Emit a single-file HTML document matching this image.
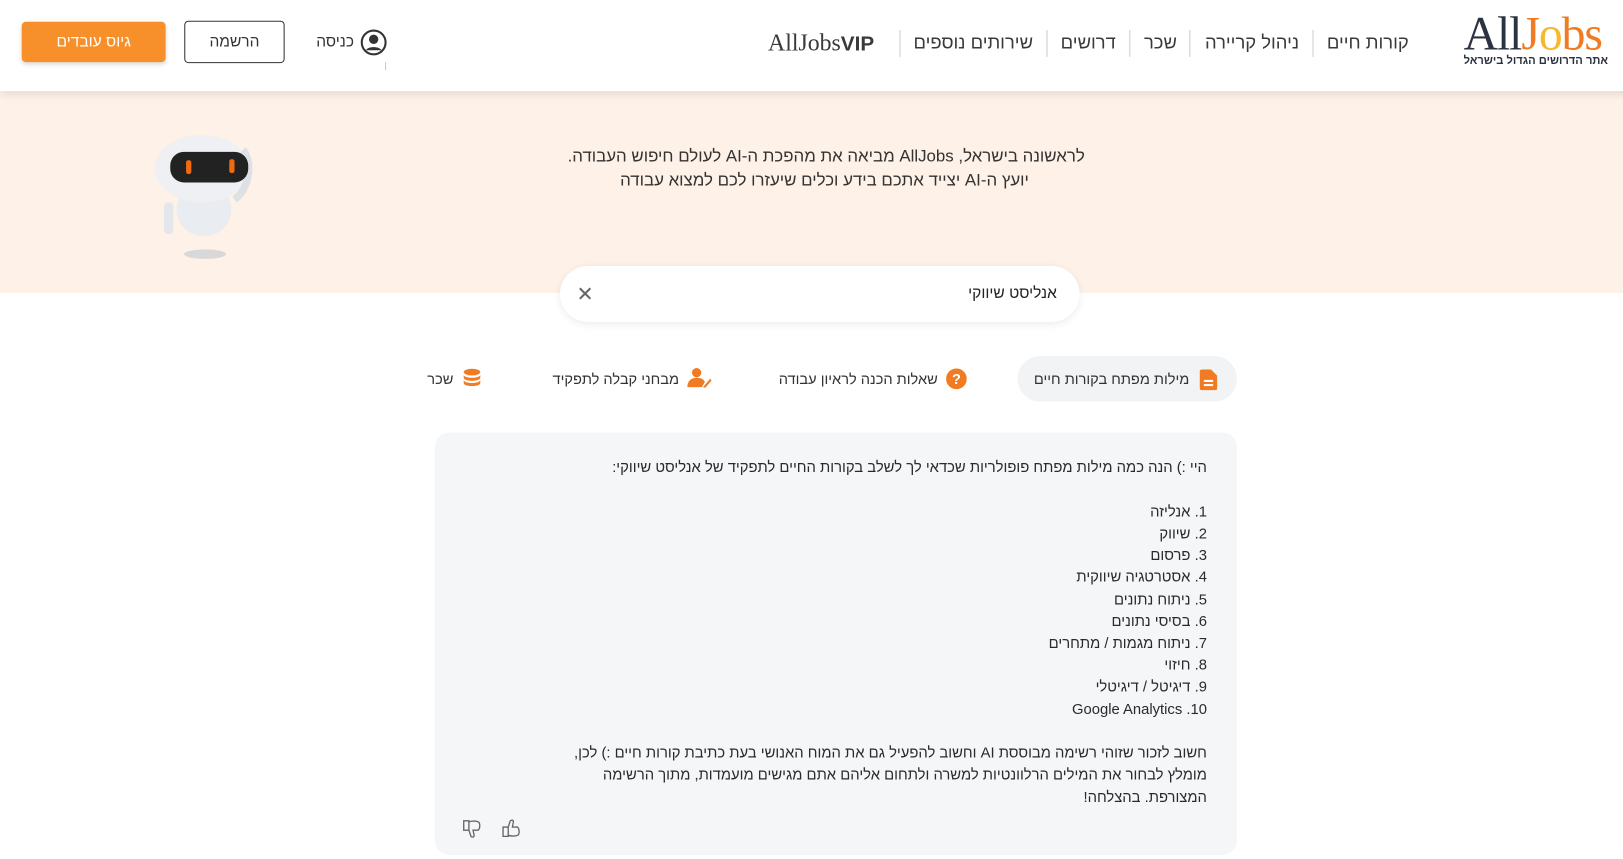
<!DOCTYPE html>
<html lang="he" dir="rtl"><head><meta charset="utf-8"><style>
*{box-sizing:border-box;margin:0;padding:0}
body{width:1623px;height:854px;overflow:hidden;background:#fff;font-family:"Liberation Sans","Noto Sans CJK SC",sans-serif;color:#333;position:relative}
#w{position:absolute;left:0;top:0;width:1623px;height:830px;transform:scale(1.0351);transform-origin:0 0}
.hdr{position:absolute;left:0;top:0;width:1623px;height:88px;background:#fff;box-shadow:0 3px 8px rgba(0,0,0,.1);z-index:2}
.a{position:absolute;white-space:nowrap}
.nav{font-size:17.8px;color:#3a3a3a;top:31px}
.sep{position:absolute;top:29px;width:1px;height:26px;background:#ccc}
.banner{position:absolute;left:0;top:88px;width:1623px;height:195px;background:#fef1e7}
.box{position:absolute;left:420px;top:418px;width:775px;height:408px;background:#f5f6f7;border-radius:14px}
.ln{position:absolute;right:457px;font-size:14.3px;color:#2a2a2a;white-space:nowrap}
</style></head><body><div id="w">
<div class="hdr">
 <div class="a" style="left:1414px;top:6px;font-family:'Liberation Serif',serif;font-size:46px;color:#2c3340;letter-spacing:-1px" dir="ltr">All<span style="color:#f07b22">J<span style="color:#f5b92a">o</span>bs</span></div>
 <div class="a" style="left:1414px;top:53px;font-size:10.8px;font-weight:bold;color:#2c3340">אתר הדרושים הגדול בישראל</div>
 <div class="a nav" style="right:262px">קורות חיים</div>
 <div class="sep" style="left:1268px"></div>
 <div class="a nav" style="right:368px">ניהול קריירה</div>
 <div class="sep" style="left:1149px"></div>
 <div class="a nav" style="right:486px">שכר</div>
 <div class="sep" style="left:1091px"></div>
 <div class="a nav" style="right:545px">דרושים</div>
 <div class="sep" style="left:1011px"></div>
 <div class="a nav" style="right:625px">שירותים נוספים</div>
 <div class="sep" style="left:869px"></div>
 <div class="a" dir="ltr" style="left:742px;top:29px;font-family:'Liberation Serif',serif;font-size:23px;color:#3a3a3a">AllJobs<b style="font-family:'Liberation Sans';font-size:20px;color:#3a3a3a">VIP</b></div>
 <svg class="a" style="left:348px;top:28px" width="26" height="26" viewBox="0 0 26 26"><circle cx="13" cy="13" r="11.5" fill="none" stroke="#333" stroke-width="2"/><circle cx="13" cy="10" r="4.5" fill="#333"/><path d="M5.5 20.5c2-4 13-4 15 0" fill="#333"/></svg>
 <div class="a" style="right:1281px;top:32px;font-size:15px;color:#333">כניסה</div>
 <div class="a" style="left:372px;top:60px;width:1px;height:8px;background:#ccc"></div>
 <div class="a" style="left:178px;top:20px;width:97px;height:41px;border:1px solid #333;border-radius:4px;text-align:center;line-height:39px;font-size:15px;color:#333">הרשמה</div>
 <div class="a" style="left:21px;top:21px;width:139px;height:39px;background:#f7902a;border-radius:4px;text-align:center;line-height:39px;font-size:15px;color:#fff;box-shadow:0 2px 4px rgba(0,0,0,.15)">גיוס עובדים</div>
</div>
<div class="banner"></div>
<svg class="a" style="left:138px;top:126px" width="112" height="128" viewBox="0 0 110 125"><ellipse cx="59" cy="117" rx="20" ry="4.5" fill="#d8d8d8"/><rect x="20" y="68" width="9" height="30" rx="4" fill="#e3e6eb"/><ellipse cx="58" cy="75" rx="26" ry="25" fill="#e9ecf0"/><ellipse cx="56" cy="36" rx="45" ry="32" fill="#eef0f3"/><path d="M95 18c9 10 7 37-8 47" stroke="#dde1e6" stroke-width="7" fill="none"/><rect x="26" y="20" width="74" height="29" rx="13" fill="#222"/><rect x="41" y="28" width="5" height="13" rx="2" fill="#f06a10"/><rect x="82" y="27" width="5" height="13" rx="2" fill="#f06a10"/></svg>
<div class="a" style="right:575px;top:142px;font-size:16.3px;color:#333">לראשונה בישראל, AllJobs מביאה את מהפכת ה-AI לעולם חיפוש העבודה.</div>
<div class="a" style="right:629px;top:165px;font-size:16.3px;color:#333">יועץ ה-AI יצייד אתכם בידע וכלים שיעזרו לכם למצוא עבודה</div>
<div class="a" style="left:541px;top:257px;width:502px;height:54px;background:#fff;border-radius:27px;box-shadow:0 2px 8px rgba(0,0,0,.08)"></div>
<div class="a" style="right:602px;top:275px;font-size:15px;color:#222">אנליסט שיווקי</div>
<div class="a" style="left:557px;top:272px;font-size:20px;color:#666">✕</div>
<div class="a" style="left:983px;top:344px;width:212px;height:44px;background:#f2f3f5;border-radius:22px"></div>
<svg class="a" style="left:1159px;top:357px" width="17" height="20" viewBox="0 0 17 20"><path d="M0 2a2 2 0 0 1 2-2h9l6 6v12a2 2 0 0 1-2 2H2a2 2 0 0 1-2-2z" fill="#f07b22"/><rect x="4" y="10" width="9" height="2" fill="#fff"/><rect x="4" y="14" width="9" height="2" fill="#fff"/></svg>
<div class="a" style="right:474px;top:358px;font-size:14.1px;color:#333">מילות מפתח בקורות חיים</div>
<svg class="a" style="left:914px;top:356px" width="20" height="20"><circle cx="10" cy="10" r="10" fill="#f07b22"/><text x="10" y="15" font-size="14" font-weight="bold" fill="#fff" text-anchor="middle" font-family="Liberation Sans">?</text></svg>
<div class="a" style="right:717px;top:358px;font-size:14.1px;color:#333">שאלות הכנה לראיון עבודה</div>
<svg class="a" style="left:664px;top:355px" width="24" height="20" viewBox="0 0 24 20"><circle cx="9" cy="5" r="4.5" fill="#f07b22"/><path d="M0 19c0-6 4-9 9-9s7 2 8 4l-3 5z" fill="#f07b22"/><path d="M16 18l6-7 1.5 1.5-6 7h-2z" fill="#f07b22"/></svg>
<div class="a" style="right:967px;top:358px;font-size:14.1px;color:#333">מבחני קבלה לתפקיד</div>
<svg class="a" style="left:447px;top:356px" width="18" height="20" viewBox="0 0 18 20"><ellipse cx="9" cy="3.5" rx="8" ry="3.2" fill="#f07b22"/><path d="M1 6c0 4 16 4 16 0v3c0 4-16 4-16 0z M1 11c0 4 16 4 16 0v3c0 4-16 4-16 0z M1 16c0 4 16 4 16 0v0c0 4-16 4-16 0z" fill="#f07b22"/></svg>
<div class="a" style="right:1185px;top:358px;font-size:14.1px;color:#333">שכר</div>
<div class="box"></div>
<div class="ln" style="top:444px">היי :) הנה כמה מילות מפתח פופולריות שכדאי לך לשלב בקורות החיים לתפקיד של אנליסט שיווקי:</div>
<div class="ln" style="top:487px">1. אנליזה</div>
<div class="ln" style="top:508px">2. שיווק</div>
<div class="ln" style="top:529px">3. פרסום</div>
<div class="ln" style="top:550px">4. אסטרטגיה שיווקית</div>
<div class="ln" style="top:572px">5. ניתוח נתונים</div>
<div class="ln" style="top:593px">6. בסיסי נתונים</div>
<div class="ln" style="top:614px">7. ניתוח מגמות / מתחרים</div>
<div class="ln" style="top:635px">8. חיזוי</div>
<div class="ln" style="top:656px">9. דיגיטל / דיגיטלי</div>
<div class="ln" style="top:678px">10. Google Analytics</div>
<div class="ln" style="top:720px">חשוב לזכור שזוהי רשימה מבוססת AI וחשוב להפעיל גם את המוח האנושי בעת כתיבת קורות חיים :) לכן,</div>
<div class="ln" style="top:741px">מומלץ לבחור את המילים הרלוונטיות למשרה ולתחום אליהם אתם מגישים מועמדות, מתוך הרשימה</div>
<div class="ln" style="top:763px">המצורפת. בהצלחה!</div>
<svg class="a" style="left:446px;top:791px" width="20" height="20" viewBox="0 0 20 20"><path d="M2 2h5v9H2z M7 3c3-1 7-1 9 0 2 1 2 6 0 8h-5l1 5c0 2-2 2-3 1l-2-6" fill="none" stroke="#666" stroke-width="1.3"/></svg>
<svg class="a" style="left:484px;top:790px" width="20" height="20" viewBox="0 0 20 20"><path d="M2 9h5v9H2z M7 17c3 1 7 1 9 0 2-1 2-6 0-8h-5l1-5c0-2-2-2-3-1l-2 6" fill="none" stroke="#666" stroke-width="1.3"/></svg>
</div></body></html>
